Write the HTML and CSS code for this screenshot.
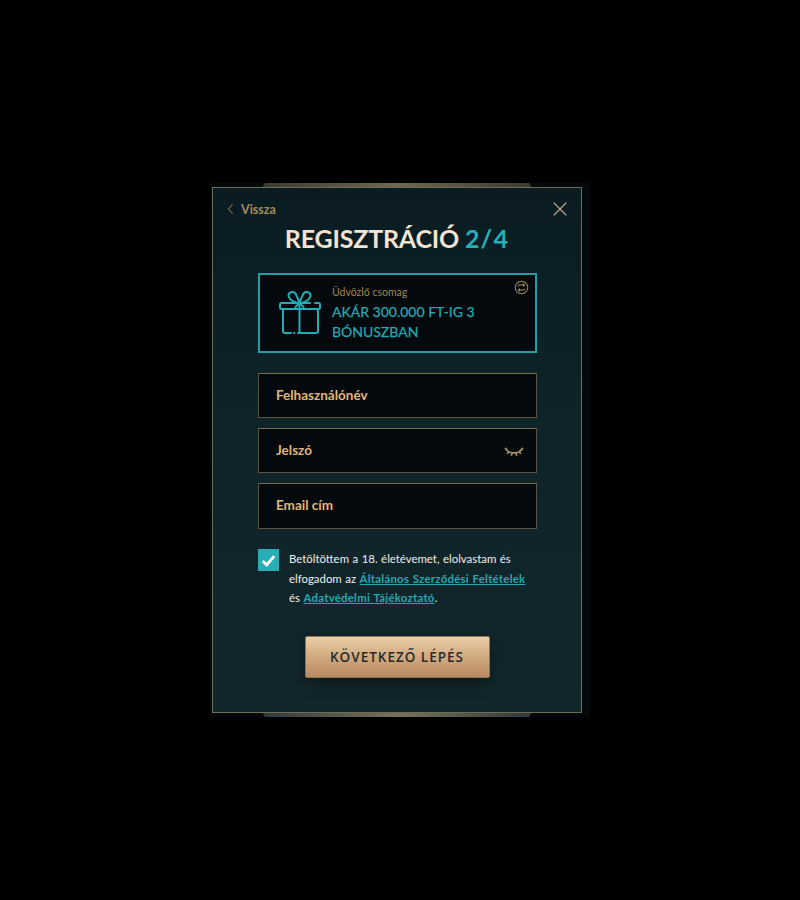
FILE: index.html
```html
<!DOCTYPE html>
<html lang="hu">
<head>
<meta charset="utf-8">
<title>Regisztráció</title>
<link rel="stylesheet" href="styles.css">
</head>
<body>
<div class="halo">
  <span class="tab tab-top"></span>
  <span class="tab tab-bottom"></span>
  <main class="modal">
    <div class="topbar">
      <a class="back"><svg class="chev" viewBox="0 0 8 14"><path d="M6.500 1.500 1.500 7l5 5.500"/></svg>Vissza</a>
      <svg class="close" viewBox="0 0 14 14"><path d="M.7.7l12.600 12.600M13.300.7.7 13.300"/></svg>
    </div>
    <h1 class="title">REGISZTRÁCIÓ <span>2/4</span></h1>
    <section class="promo">
      <svg class="gift" viewBox="0 0 42 44">
        <path d="M19 12C14 11 9.500 8 9.500 4.500 9.500 1 14 0 16 2c1.500 1.500 3 6 4.500 10 1.500-4 3-8.500 4.500-10 2-2 6.500-1 6.500 2.500 0 3.500-4.500 6.500-9.500 7.500M20.500 12l-4 4M20.500 12l4 4"/>
        <path d="M36 12h3.500a1.500 1.500 0 0 1 1.500 1.500v3a1.500 1.500 0 0 1-1.500 1.500H2.500A1.500 1.500 0 0 1 1 16.500v-3A1.500 1.500 0 0 1 2.500 12H31"/>
        <path d="M4 18v22a2 2 0 0 0 2 2h6M15 42h.5M19 42h18a2 2 0 0 0 2-2V18M20.500 12v30"/>
      </svg>
      <div class="promo-text">
        <p class="promo-label">Üdvözlő csomag</p>
        <p class="promo-main">AKÁR 300.000 FT-IG 3 BÓNUSZBAN</p>
      </div>
      <svg class="swap" viewBox="0 0 16 16">
        <circle cx="8" cy="8" r="6.700"/>
        <path d="M4.500 7V6.300a1 1 0 0 1 1-1h5.500M9.700 3.800 11.300 5.300 9.700 6.800M11.500 9v.7a1 1 0 0 1-1 1H5M6.300 9.200 4.700 10.700 6.300 12.200"/>
      </svg>
    </section>
    <div class="fields">
      <div class="field"><span class="field-label">Felhasználónév</span></div>
      <div class="field"><span class="field-label">Jelszó</span>
        <svg class="lash" viewBox="0 0 20 10">
          <path d="M2 2.500C6 7 14 7 18 2.500M1 1l2.500 2.500M4.500 4.500 3.500 7M8 6l-.7 2.800M12 6l.7 2.800M15.500 4.500l1 2.500M19 1l-2.500 2.500"/>
        </svg>
      </div>
      <div class="field field-last"><span class="field-label">Email cím</span></div>
    </div>
    <div class="consent">
      <span class="check"><svg viewBox="0 0 16 14"><path d="M1.800 7.500 6 11.800 14.200 2.200"/></svg></span>
      <p>Betöltöttem a 18. életévemet, elolvastam és elfogadom az <a>Általános Szerződési Feltételek</a> és <a>Adatvédelmi Tájékoztató</a>.</p>
    </div>
    <button class="next" type="button">KÖVETKEZŐ LÉPÉS</button>
  </main>
</div>
</body>
</html>
```
FILE: styles.css
```css
* { box-sizing: border-box; }
html, body { margin: 0; height: 900px; background: #000; }
body {
  padding-top: 183px;
  font-family: "Lato", "Liberation Sans", sans-serif;
  overflow: hidden;
}
p, h1 { margin: 0; }
.halo {
  position: relative;
  width: 380px;
  height: 534px;
  margin-left: 210px;
  padding: 4px 8px 0 2px;
  background: #04090b;
}
.tab {
  position: absolute;
  left: 52px;
  width: 270px;
  height: 5px;
}
.tab-top {
  top: 0;
  background: linear-gradient(90deg, #3a3a30, #6f6850 50%, #3a3a30);
  clip-path: polygon(3px 0, 267px 0, 270px 100%, 0 100%);
}
.tab-bottom {
  bottom: 0;
  background: linear-gradient(90deg, #2c3a3a, #7a7258 50%, #2c3a3a);
  clip-path: polygon(0 0, 270px 0, 267px 100%, 3px 100%);
}
.modal {
  position: relative;
  display: flex;
  flex-direction: column;
  width: 370px;
  height: 526px;
  padding: 0 45px;
  border: 1px solid #6f6c55;
  background: linear-gradient(180deg, #0a1c22 0%, #0e2429 45%, #12272c 100%);
}
.topbar {
  display: flex;
  justify-content: space-between;
  align-items: center;
  height: 14px;
  margin: 14px -31px 0 -31px;
}
.back {
  display: flex;
  align-items: center;
  gap: 7px;
  color: #a58b5e;
  font-size: 12.500px;
  font-weight: 700;
}
.chev { width: 7px; height: 12px; fill: none; stroke: #7d7154; stroke-width: 1.200; }
.close { width: 14px; height: 14px; fill: none; stroke: #c8b893; stroke-width: 1.200; }
.title {
  margin-top: 7px;
  height: 31px;
  text-align: center;
  color: #f3e3d0;
  font-size: 25px;
  line-height: 31px;
  font-weight: 700;
  letter-spacing: -.2px;
}
.title span { color: #25b0b9; letter-spacing: 1.200px; }
.promo {
  position: relative;
  display: flex;
  width: 279px;
  height: 80px;
  margin-top: 19px;
  padding: 10px 16px 0 19px;
  border: 2px solid #1f9ea6;
  background: #03090c;
}
.gift {
  flex: none;
  width: 42px;
  height: 44px;
  margin-top: 6px;
  fill: none;
  stroke: #22acb5;
  stroke-width: 2;
  stroke-linecap: round;
  stroke-linejoin: round;
}
.promo-text { margin-left: 11px; }
.promo-label { color: #a5824f; font-size: 10.500px; line-height: 14px; }
.promo-main {
  margin-top: 3px;
  color: #22a9b3;
  font-size: 14px;
  line-height: 19.500px;
  -webkit-text-stroke: .25px #22a9b3;
}
.swap {
  position: absolute;
  top: 5px;
  right: 6px;
  width: 15px;
  height: 15px;
  fill: none;
  stroke: #a58b5e;
  stroke-width: 1.100;
}
.fields {
  display: flex;
  flex-direction: column;
  gap: 10px;
  margin-top: 20px;
}
.field {
  display: flex;
  justify-content: space-between;
  align-items: center;
  width: 279px;
  height: 45px;
  padding: 0 12px 0 17px;
  border: 1px solid #5b5540;
  border-top-color: #7a6e4a;
  background: #03090c;
  color: #e1b677;
  font-size: 13.500px;
  font-weight: 700;
}
.field-last { height: 46px; }
.field-label { margin-top: -2px; }
.lash {
  width: 20px;
  height: 10px;
  margin-top: 3px;
  fill: none;
  stroke: #a58b5e;
  stroke-width: 1.800;
}
.consent {
  display: flex;
  gap: 10px;
  margin-top: 20px;
}
.check {
  flex: none;
  display: flex;
  align-items: center;
  justify-content: center;
  width: 21px;
  height: 22px;
  background: #29adb5;
}
.check svg { width: 15px; height: 13px; fill: none; stroke: #fff; stroke-width: 3; }
.consent p {
  width: 245px;
  color: #eef0ee;
  font-size: 11.400px;
  line-height: 19.500px;
  word-spacing: .6px;
}
.consent a { color: #22a9b3; font-weight: 700; letter-spacing: .25px; text-decoration: underline; }
.next {
  align-self: center;
  width: 185px;
  height: 42px;
  margin-top: 28px;
  border: 1px solid #8e7553;
  border-radius: 2px;
  background: linear-gradient(180deg, #ebcfa8 0%, #d4ac82 45%, #b98a60 100%);
  box-shadow: 0 6px 14px rgba(0,0,0,.35);
  color: #1f2b2b;
  font-family: "Open Sans", "Liberation Sans", sans-serif;
  font-size: 13.500px;
  font-weight: 600;
  letter-spacing: 1px;
}
```
